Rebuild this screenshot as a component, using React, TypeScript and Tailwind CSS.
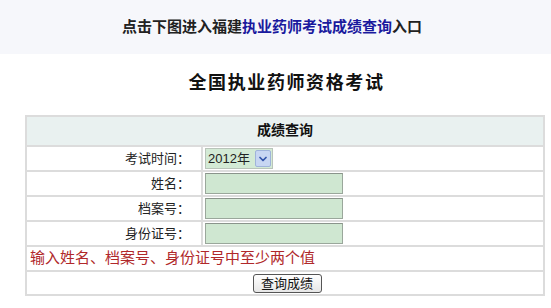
import { ChevronDown } from "lucide-react";

const font = { fontFamily: '"Liberation Sans", "Noto Sans CJK SC", sans-serif' };

function Row({ label, children }: { label: string; children: React.ReactNode }) {
  return (
    <div className="flex h-[25px] border-t-2 border-[#dcdcdc]">
      <div className="w-[176px] border-r-2 border-[#dcdcdc] text-right pr-[11px] text-[13px] leading-[23px] text-[#222]">
        {label}
      </div>
      <div className="flex items-center pl-[2px]">{children}</div>
    </div>
  );
}

function Field() {
  return <input className="w-[138px] h-[21px] bg-[#cfe7d1] border border-[#9aa79b] border-t-[#8a948b] outline-none" />;
}

export default function App() {
  return (
    <div className="w-[551px] h-[308px] bg-white" style={font}>
      <div className="h-[54px] bg-[#f6f7fb] flex items-center justify-center pr-[7px]">
        <p className="text-[15px] font-bold text-[#222]">
          点击下图进入福建<span className="text-[#1a1a9e]">执业药师考试成绩查询</span>入口
        </p>
      </div>

      <h1 className="mt-[17px] h-[24px] leading-[24px] text-center pl-[22px] text-[18px] font-bold tracking-[1.6px] text-[#111]">
        全国执业药师资格考试
      </h1>

      <div className="ml-[25px] mt-[20px] w-[520px] border-2 border-t-0 border-[#dcdcdc]">
        <div className="h-[30px] bg-[#e9f1f0] border-t-2 border-[#dcdcdc] text-center text-[14px] font-bold leading-[27px] text-[#111]">
          成绩查询
        </div>
        <Row label="考试时间：">
          <div className="flex items-center h-[21px] w-[68px] bg-[#d3ead5] border border-[#b9c4ba]">
            <span className="text-[13px] pl-[2px] text-[#222] leading-none">2012年</span>
            <span className="ml-auto mr-[1px] w-[16px] h-[17px] rounded-[2px] bg-[#c7d6f2] border border-[#9fb3da] flex items-center justify-center">
              <ChevronDown size={12} strokeWidth={3.5} color="#3355aa" />
            </span>
          </div>
        </Row>
        <Row label="姓名：">
          <Field />
        </Row>
        <Row label="档案号：">
          <Field />
        </Row>
        <Row label="身份证号：">
          <Field />
        </Row>
        <div className="h-[25px] border-t-2 border-[#dcdcdc] pl-[3px] text-[15px] leading-[22px] text-[#b0282a]">
          输入姓名、档案号、身份证号中至少两个值
        </div>
        <div className="h-[24px] border-t-2 border-[#dcdcdc] flex items-center justify-center pl-[4px]">
          <button className="w-[69px] h-[19px] rounded-[3px] border border-[#555] bg-gradient-to-b from-white to-[#e6e6e6] text-[13px] leading-none text-[#111]">
            查询成绩
          </button>
        </div>
      </div>
    </div>
  );
}
